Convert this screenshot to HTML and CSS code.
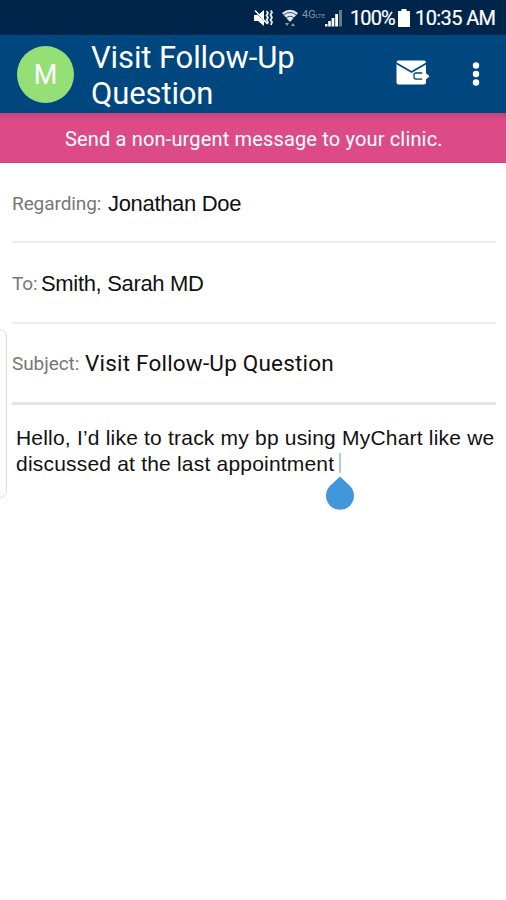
FILE: index.html
```html
<!DOCTYPE html>
<html lang="en">
<head>
<meta charset="utf-8">
<title>Visit Follow-Up Question</title>
<link rel="stylesheet" href="styles.css">
</head>
<body>
<div class="status">
  <svg class="mute" width="20" height="18" viewBox="0 0 20 18"><path d="M1 6h4l6-5v16l-6-5H1z" fill="#fff"/><path d="M2 3l12 12" stroke="#00254b" stroke-width="1"/><path d="M2 1.500l12 13" stroke="#fff" stroke-width="1.500"/><path d="M13.500 2l1.500 2-1.500 2.500 1.500 2-1.500 2.500 1.500 2-1 2M18 1.500l1 2-1.500 2.500 1.500 2.500-1.500 2.500 1.500 2-1 3" fill="none" stroke="#e6ebf0" stroke-width="1.800"/></svg>
  <svg class="wifi" width="16" height="18" viewBox="0 0 16 18"><path d="M0 4Q8-2.500 16 4L8 13z" fill="#e4e9ef"/><path d="M1.500 6Q8 1 14.500 6M4 9Q8 5.500 12 9" fill="none" stroke="#385170" stroke-width="1"/><path d="M3 14h4l-2 3zM9 17h4l-2-3z" fill="#8b9db1"/></svg>
  <span class="net">4G<small>LTE</small></span>
  <svg class="signal" width="18" height="18" viewBox="0 0 18 18"><path d="M0 15h2.500v2.500H0zM3.200 12h2.600v5.500H3.200zM6.600 9h2.700v8.500H6.600zM10.200 5H13v12.500h-2.800z" fill="#fff"/><path d="M14 1h3v16.500h-3z" fill="#637a93"/></svg>
  <span class="percent">100%</span>
  <svg class="battery" width="12" height="18" viewBox="0 0 12 18"><path d="M3.500 0h5v2H12v16H0V2h3.500z" fill="#fff"/></svg>
  <span class="clock">10:35 AM</span>
</div>
<header class="appbar">
  <div class="avatar">M</div>
  <h1 class="title">Visit Follow-Up<br>Question</h1>
  <svg class="send" width="34" height="26" viewBox="0 0 34 26"><path d="M2.500.5h25.500a2 2 0 0 1 2 2v20a2 2 0 0 1-2 2h-25.500a2 2 0 0 1-2-2v-20a2 2 0 0 1 2-2z" fill="#fff"/><path d="M0 3L15.500 12 31 3" fill="none" stroke="#00467f" stroke-width="1.600"/><path d="M26.500 13H20q-2 0-2 2v2q0 2 2 2h6.500" fill="none" stroke="#00467f" stroke-width="1.300"/><path d="M20 14h6.500V10l7 6.200-7 6.200V18.300H20z" fill="#fff"/></svg>
  <svg class="more" width="8" height="26" viewBox="0 0 8 26"><g fill="#fff"><circle cx="4" cy="4.500" r="3.200"/><circle cx="4" cy="13" r="3.200"/><circle cx="4" cy="21.500" r="3.200"/></g></svg>
</header>
<div class="banner"><span>Send a non-urgent message to your clinic.</span></div>
<main class="form">
  <div class="row"><span class="label regarding">Regarding:</span><span class="value name">Jonathan Doe</span></div>
  <div class="row middle"><span class="label to">To:</span><span class="value doctor">Smith, Sarah MD</span></div>
  <div class="row last"><span class="label subject">Subject:</span><span class="value topic">Visit Follow-Up Question</span></div>
  <div class="message">
    <div class="line1">Hello, I’d like to track my bp using MyChart like we</div>
    <div class="line2">discussed at the last appointment<span class="caret"><svg class="handle" width="28" height="34" viewBox="0 0 28 34"><path d="M14 0.500L23.800 9.800A14 14 0 1 1 4.200 9.800Z" fill="#4296db"/></svg></span></div>
  </div>
</main>
<div class="edge"></div>
</body>
</html>
```

FILE: styles.css
```css
* { box-sizing: border-box; }
body {
  margin: 0;
  width: 506px;
  height: 900px;
  position: relative;
  overflow: hidden;
  background: #fff;
  font-family: Roboto, sans-serif;
  color: #111;
  white-space: nowrap;
}
.status {
  display: flex;
  align-items: center;
  height: 35px;
  padding-left: 253px;
  background: #00254b;
  color: #fff;
  font-size: 20px;
}
.status svg, .status span { flex: none; }
.wifi { margin-left: 9px; }
.net { width: 20px; margin-left: 4px; font-size: 11px; line-height: 11px; color: #8395aa; margin-top: -5px; }
.net small { font-size: 6px; }
.signal { margin-left: 3px; }
.percent { width: 43px; margin-left: 7px; letter-spacing: -0.9px; }
.battery { margin-left: 5px; }
.clock { margin-left: 5px; letter-spacing: -0.6px; }
.percent, .clock { -webkit-text-stroke: 0.2px #fff; }
.appbar {
  display: flex;
  align-items: center;
  height: 78px;
  padding-left: 17px;
  background: #00467f;
  color: #fff;
}
.avatar {
  flex: none;
  width: 57px;
  height: 57px;
  border-radius: 50%;
  background: #94e077;
  font-size: 27px;
  line-height: 58px;
  text-align: center;
}
.title {
  margin: 3px 0 0 17px;
  width: 305px;
  font-size: 31px;
  font-weight: 400;
  line-height: 36px;
  letter-spacing: -0.12px;
}
.send { flex: none; margin-bottom: 3px; }
.more { flex: none; margin-left: 42px; }
.banner {
  height: 50px;
  padding-left: 65px;
  border-bottom: 1px solid #d83880;
  background: linear-gradient(#b9467e, #dc4b87 7px);
  color: #fff;
  font-size: 20px;
  line-height: 53px;
  letter-spacing: 0.16px;
}
.form { padding: 0 10px 0 12px; }
.row {
  display: flex;
  height: 80px;
  line-height: 81px;
  border-bottom: 2px solid #ececec;
}
.row.middle { height: 81px; }
.row.last { height: 81px; line-height: 79px; border-bottom: 3px solid #e4e4e4; }
.label { color: #777; font-size: 19px; letter-spacing: -0.08px; }
.value { font-size: 22px; }
.regarding { width: 96px; }
.to { width: 29px; }
.subject { width: 73px; }
.name, .doctor, .message { font-family: "Liberation Sans", sans-serif; }
.name, .doctor { letter-spacing: -0.33px; }
.topic { font-size: 22.500px; letter-spacing: 0.2px; }
.message { padding: 20px 0 0 4px; font-size: 21px; line-height: 26px; letter-spacing: 0.2px; }
.caret {
  display: inline-block;
  position: relative;
  width: 2px;
  height: 20px;
  margin-left: 5px;
  vertical-align: -2px;
  background: #a9ccef;
}
.handle { position: absolute; left: -13px; top: 23px; }
.edge {
  position: absolute;
  left: -8px;
  top: 329px;
  width: 15px;
  height: 169px;
  border: 1.5px solid #dfdfdf;
  border-radius: 7px;
  background: #fcfcfc;
}
```
